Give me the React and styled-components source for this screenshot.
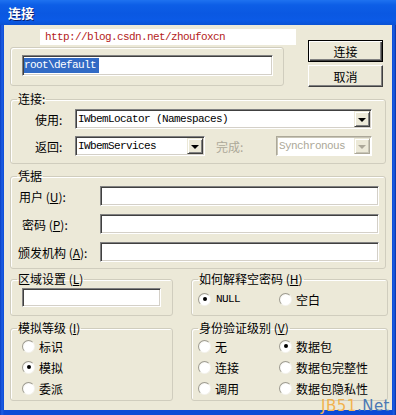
import React from 'react';
import styled, { createGlobalStyle, css } from 'styled-components';

const GlobalStyle = createGlobalStyle`
  html, body { margin: 0; padding: 0; background: #fff; }
  body { font-family: "Noto Sans CJK SC", "Noto Sans", sans-serif; font-size: 12px; color: #000; }
`;

const mono = `"Liberation Mono", "DejaVu Sans Mono", monospace`;

export default function App() {
    return (
        <>
            <GlobalStyle />
            <Window>
                <TitleBar>连接</TitleBar>
                <Client>
                    <TopRow>
                        <TopLeft>
                            <UrlStrip>http://blog.csdn.net/zhoufoxcn</UrlStrip>
                            <PlainGroup>
                                <NamespaceBox>
                                    <Selected>{'root\\default'}</Selected>
                                </NamespaceBox>
                            </PlainGroup>
                        </TopLeft>
                        <Buttons>
                            <Button $default>连接</Button>
                            <Button>取消</Button>
                        </Buttons>
                    </TopRow>

                    <Group $mt={5} $w={376} $h={72}>
                        <Legend>连接:</Legend>
                        <GroupBody $pt={3} $pl={24} $gap={7}>
                            <FieldRow>
                                <Label $w={40}>使用:</Label>
                                <Combo value="IWbemLocator (Namespaces)" $w={297} />
                            </FieldRow>
                            <FieldRow>
                                <Label $w={40}>返回:</Label>
                                <Combo value="IWbemServices" $w={130} />
                                <Label $w={60} $ml={11} $disabled>完成:</Label>
                                <Combo value="Synchronous" $w={96} disabled />
                            </FieldRow>
                        </GroupBody>
                    </Group>

                    <Group $mt={5} $w={376} $h={100}>
                        <Legend>凭据</Legend>
                        <GroupBody $pt={3} $pl={7} $gap={8}>
                            <FieldRow>
                                <Label $w={81} $ml={1}>用户 (<u>U</u>):</Label>
                                <TextBox $w={279} $h={20} />
                            </FieldRow>
                            <FieldRow>
                                <Label $w={78} $ml={4}>密码 (<u>P</u>):</Label>
                                <TextBox $w={279} $h={20} />
                            </FieldRow>
                            <FieldRow>
                                <Label $w={82}>颁发机构 (<u>A</u>):</Label>
                                <TextBox $w={279} $h={20} />
                            </FieldRow>
                        </GroupBody>
                    </Group>

                    <BottomRow $mt={3}>
                        <Group $w={163} $h={44}>
                            <Legend>区域设置 (<u>L</u>)</Legend>
                            <GroupBody $pt={2} $pl={11}>
                                <TextBox $w={139} $h={19} />
                            </GroupBody>
                        </Group>
                        <Group $w={197} $h={44}>
                            <Legend>如何解释空密码 (<u>H</u>)</Legend>
                            <GroupBody $pt={6} $pl={6}>
                                <RadioGrid>
                                    <Radio checked label="NULL" latin />
                                    <Radio label="空白" />
                                </RadioGrid>
                            </GroupBody>
                        </Group>
                    </BottomRow>

                    <BottomRow $mt={5}>
                        <Group $w={163} $h={80}>
                            <Legend>模拟等级 (<u>I</u>)</Legend>
                            <GroupBody $pt={4} $pl={11} $gap={7}>
                                <Radio label="标识" />
                                <Radio checked label="模拟" />
                                <Radio label="委派" />
                            </GroupBody>
                        </Group>
                        <Group $w={197} $h={80}>
                            <Legend>身份验证级别 (<u>V</u>)</Legend>
                            <GroupBody $pt={4} $pl={6}>
                                <RadioGrid>
                                    <Radio label="无" />
                                    <Radio checked label="数据包" />
                                    <Radio label="连接" />
                                    <Radio label="数据包完整性" />
                                    <Radio label="调用" />
                                    <Radio label="数据包隐私性" />
                                </RadioGrid>
                            </GroupBody>
                        </Group>
                    </BottomRow>

                    <Watermark>
                        <WmOrange>JB51</WmOrange><WmBlue>.Net</WmBlue>
                    </Watermark>
                </Client>
            </Window>
        </>
    );
}

const Combo = ({ value, disabled, ...rest }) => (
    <ComboBox $disabled={disabled} {...rest}>
        <ComboText $disabled={disabled}>{value}</ComboText>
        <DropButton $disabled={disabled}>
            <Arrow $disabled={disabled} />
        </DropButton>
    </ComboBox>
);

const Radio = ({ checked, label, latin }) => (
    <RadioRow>
        <RadioCircle>{checked && <RadioDot />}</RadioCircle>
        <RadioLabel $latin={latin}>{label}</RadioLabel>
    </RadioRow>
);

const Window = styled.div`
width: 396px;
height: 415px;
display: flex;
flex-direction: column;
background: linear-gradient(to right, #0A3FC2 0px, #1C5EE4 2px, #0B4BD6 4px, #0B4BD6 392px, #1C5EE4 394px, #06309F 396px);
overflow: hidden;
`;

const TitleBar = styled.div`
height: 25px;
flex: none;
display: flex;
align-items: center;
padding-left: 8px;
color: #fff;
font: bold 13px "Noto Sans CJK SC", sans-serif;
text-shadow: 1px 1px 0 #0A1E6E;
background: linear-gradient(to bottom, #1E72F0 0%, #0D5EE6 20%, #0A58E2 55%, #0B5AE6 80%, #0A52D4 100%);
`;

const Client = styled.div`
position: relative;
flex: none;
margin: 0 4px;
width: 388px;
height: 385px;
box-sizing: border-box;
padding: 4px 0 0 6px;
background: #ECE9D8;
`;

const TopRow = styled.div`
display: flex;
`;

const TopLeft = styled.div`
width: 290px;
display: flex;
flex-direction: column;
`;

const UrlStrip = styled.div`
margin-left: 30px;
width: 256px;
height: 16px;
box-sizing: border-box;
padding-left: 5px;
background: #fff;
color: #B41C22;
font: 11px/16px ${mono};
letter-spacing: -0.6px;
`;

const PlainGroup = styled.div`
margin-top: 2px;
width: 274px;
height: 39px;
box-sizing: border-box;
padding: 7px 0 0 11px;
border: 1px solid #D0CDBE;
border-radius: 3px;
box-shadow: inset 1px 1px 0 #fff;
`;

const sunken = css`
border-style: solid;
border-width: 1px;
border-color: #808080 #fff #fff #808080;
box-shadow: inset 1px 1px 0 #404040, inset -1px -1px 0 #D4D0C8;
`;

const TextBox = styled.div`
width: ${({ $w }) => $w}px;
height: ${({ $h }) => $h}px;
box-sizing: border-box;
${sunken}
background: #fff;
`;

const NamespaceBox = styled.div`
width: 251px;
height: 21px;
box-sizing: border-box;
${sunken}
background: #fff;
padding: 2px 0 0 1px;
font: 11px/15px ${mono};
letter-spacing: -0.6px;
white-space: nowrap;
`;

const Selected = styled.span`
display: inline-block;
width: 75px;
overflow: hidden;
vertical-align: top;
background: #316AC5;
color: #fff;
`;

const Buttons = styled.div`
margin: 11px 0 0 8px;
display: flex;
flex-direction: column;
gap: 3px;
`;

const Button = styled.button`
width: 75px;
height: 22px;
padding: 0;
background: #ECE9D8;
font: 12px "Noto Sans CJK SC", sans-serif;
color: #000;
border: 1px solid;
border-color: #fff #404040 #404040 #fff;
box-shadow: inset -1px -1px 0 #808080;
${({ $default }) => $default && css`
    border-color: #000;
    box-shadow: inset 1px 1px 0 #fff, inset -1px -1px 0 #404040, inset -2px -2px 0 #808080;
`}
`;

const Group = styled.fieldset`
margin: ${({ $mt }) => $mt || 0}px 0 0 0;
padding: 0;
min-width: 0;
width: ${({ $w }) => $w}px;
height: ${({ $h }) => $h}px;
box-sizing: border-box;
border: 1px solid #D0CDBE;
border-radius: 3px;
box-shadow: inset 1px 1px 0 #fff;
`;

const Legend = styled.legend`
margin-left: 6px;
padding: 0 1px;
font-size: 12px;
line-height: 14px;
`;

const GroupBody = styled.div`
display: flex;
flex-direction: column;
gap: ${({ $gap }) => $gap || 0}px;
padding-top: ${({ $pt }) => $pt}px;
padding-left: ${({ $pl }) => $pl}px;
`;

const FieldRow = styled.div`
display: flex;
align-items: center;
`;

const Label = styled.span`
width: ${({ $w }) => $w}px;
margin-left: ${({ $ml }) => $ml || 0}px;
flex: none;
white-space: nowrap;
color: ${({ $disabled }) => $disabled ? '#ACA899' : '#000'};
`;

const BottomRow = styled.div`
margin-top: ${({ $mt }) => $mt}px;
display: flex;
gap: 18px;
`;

const ComboBox = styled.div`
width: ${({ $w }) => $w}px;
height: 20px;
box-sizing: border-box;
display: flex;
align-items: center;
padding: 0 1px 0 2px;
${sunken}
background: #fff;
${({ $disabled }) => $disabled && css`
    border-color: #ACA899 #fff #fff #ACA899;
    box-shadow: inset 1px 1px 0 #C8C5B6;
`}
`;

const ComboText = styled.span`
flex: 1;
white-space: nowrap;
overflow: hidden;
font: 11px ${mono};
letter-spacing: -0.6px;
color: ${({ $disabled }) => $disabled ? '#ACA899' : '#000'};
`;

const DropButton = styled.div`
width: 16px;
height: 16px;
box-sizing: border-box;
display: flex;
align-items: center;
justify-content: center;
background: #ECE9D8;
border: 1px solid;
border-color: #ECE9D8 #404040 #404040 #ECE9D8;
box-shadow: inset 1px 1px 0 #fff, inset -1px -1px 0 #808080;
${({ $disabled }) => $disabled && css`
    border-color: #ECE9D8 #ACA899 #ACA899 #ECE9D8;
    box-shadow: inset 1px 1px 0 #fff, inset -1px -1px 0 #C8C5B6;
`}
`;

const Arrow = styled.span`
width: 0;
height: 0;
margin-top: 1px;
border-left: 4px solid transparent;
border-right: 4px solid transparent;
border-top: 4px solid ${({ $disabled }) => $disabled ? '#ACA899' : '#000'};
`;

const RadioGrid = styled.div`
display: grid;
grid-template-columns: 81px auto;
row-gap: 7px;
`;

const RadioRow = styled.div`
display: flex;
align-items: center;
height: 14px;
`;

const RadioCircle = styled.span`
width: 13px;
height: 13px;
flex: none;
box-sizing: border-box;
border-radius: 50%;
border: 1px solid;
border-color: #9D9B90 #F4F3EE #F4F3EE #9D9B90;
background: radial-gradient(circle at 60% 60%, #fff 55%, #E6E4DA 100%);
display: flex;
align-items: center;
justify-content: center;
`;

const RadioDot = styled.span`
width: 4px;
height: 4px;
border-radius: 50%;
background: #000;
`;

const RadioLabel = styled.span`
margin-left: 4px;
white-space: nowrap;
${({ $latin }) => $latin && css`
    font: 11px ${mono};
    letter-spacing: -0.6px;
    margin-left: 5px;
`}
`;

const Watermark = styled.div`
position: absolute;
right: 2px;
bottom: -6px;
font: 15px/20px "DejaVu Sans", sans-serif;
letter-spacing: 0.5px;
`;

const WmOrange = styled.span`
color: #F2B24E;
`;

const WmBlue = styled.span`
color: #4A78B4;
`;
